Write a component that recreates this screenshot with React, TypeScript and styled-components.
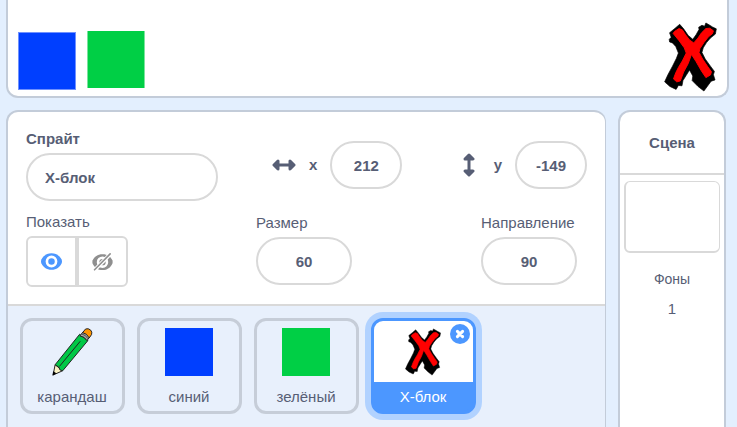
import React, { useState } from 'react';
import styled, { createGlobalStyle, css } from 'styled-components';

const ink = '#575e75';
const accent = '#4c97ff';
const line = '#d9d9d9';
const edge = '#c3ccd9';

const GlobalStyle = createGlobalStyle`
  * { box-sizing: border-box; }
  body {
    margin: 0;
    background: #e3effe;
    color: ${ink};
    font: 15px/18px "Liberation Sans", Arial, sans-serif;
    overflow: hidden;
  }
  button, input { font: inherit; color: inherit; }
`;

const Page = styled.div`
  display: flex;
  flex-direction: column;
  gap: 12px;
  min-height: 100vh;
  padding-left: 6px;
`;

const Stage = styled.section`
  display: flex;
  align-items: flex-start;
  margin-right: 8px;
  padding: 22px 10px 4px;
  background: #fff;
  border: 2px solid ${edge};
  border-top: 0;
  border-radius: 0 0 12px 12px;
`;

const StageBlock = styled.div<{ $fill: string; $fringe: string; $flat?: boolean }>`
  width: 58px;
  height: ${p => (p.$flat ? 57 : 58)}px;
  margin: ${p => (p.$flat ? '9px 0 0 11px' : '10px 0 0')};
  background: ${p => p.$fill};
  border: 1px solid ${p => p.$fringe};
  ${p => p.$flat && css`border-width: 0 1px;`}
`;

const StageCross = styled.div`
  display: flex;
  margin-left: auto;
`;

const Targets = styled.main`
  flex: 1;
  display: grid;
  grid-template-columns: minmax(0, 1fr) 108px;
  gap: 12px;
  margin-right: 11px;
`;

const Panel = styled.section`
  display: flex;
  flex-direction: column;
  background: #fff;
  border: 2px solid ${edge};
  border-bottom: 0;
  border-radius: 12px 12px 0 0;
  overflow: hidden;
`;

const SpritePanel = styled(Panel)`
  border-right-width: 1px;
`;

const Info = styled.form`
  display: flex;
  padding: 18px 18px 17px;
  border-bottom: 2px solid ${line};
`;

const NameColumn = styled.div`
  display: flex;
  flex-direction: column;
  gap: 12px;
`;

const NumberColumn = styled.div<{ $end?: boolean }>`
  display: flex;
  flex-direction: column;
  gap: 25px;
  padding-top: 11px;
  margin-left: ${p => (p.$end ? 'auto' : '38px')};
  align-items: ${p => (p.$end ? 'flex-end' : 'stretch')};
`;

const Field = styled.div<{ $inset?: boolean }>`
  display: flex;
  flex-direction: column;
  align-items: flex-start;
  gap: 5px;
  margin-right: ${p => (p.$inset ? 10 : 0)}px;
`;

const AxisField = styled.div<{ $inset?: boolean }>`
  display: flex;
  align-items: center;
  gap: 13px;
  font-weight: bold;
  padding-left: ${p => (p.$inset ? 16 : 0)}px;
`;

const Label = styled.label<{ $strong?: boolean }>`
  font-weight: ${p => (p.$strong ? 'bold' : 'inherit')};
`;

const Caption = styled.span``;

const TextBox = styled.input<{ $w: number; $left?: boolean }>`
  width: ${p => p.$w}px;
  height: 48px;
  padding: 0 ${p => (p.$left ? 17 : 8)}px;
  background: #fff;
  border: 2px solid ${line};
  border-radius: 36px;
  font-weight: bold;
  text-align: ${p => (p.$left ? 'left' : 'center')};
  outline: none;
  &:focus { border-color: ${accent}; }
`;

const Toggle = styled.div`
  display: flex;
`;

const ToggleButton = styled.button<{ $side: 'left' | 'right' }>`
  display: flex;
  align-items: center;
  justify-content: center;
  width: 51px;
  height: 51px;
  padding: 0;
  background: #fff;
  border: 2px solid ${line};
  border-radius: ${p => (p.$side === 'left' ? '6px 0 0 6px' : '0 6px 6px 0')};
  cursor: pointer;
`;

const SpriteList = styled.ul`
  flex: 1;
  display: flex;
  flex-wrap: wrap;
  align-content: flex-start;
  gap: 12px;
  margin: 0;
  padding: 12px;
  list-style: none;
  background: #e8f0fc;
`;

const SpriteItem = styled.li`
  position: relative;
`;

const SpriteCard = styled.button<{ $active: boolean }>`
  display: flex;
  flex-direction: column;
  width: 105px;
  height: 96px;
  padding: 0;
  background: transparent;
  border: 3px solid #c6cdd8;
  border-radius: 12px;
  overflow: hidden;
  cursor: pointer;
  ${p => p.$active && css`
    background: ${accent};
    border-color: ${accent};
    color: #fff;
    box-shadow: 0 0 0 6px #b1d2ff;
  `}
`;

const Costume = styled.span<{ $active: boolean }>`
  display: flex;
  justify-content: center;
  align-self: stretch;
  height: 61px;
  padding: 7px 1px 0 0;
  background: ${p => (p.$active ? '#fff' : 'transparent')};
`;

const Swatch = styled.span<{ $fill: string }>`
  width: 48px;
  height: 48px;
  background: ${p => p.$fill};
`;

const SpriteName = styled.span`
  align-self: stretch;
  padding-right: 1px;
  text-align: center;
  line-height: 29px;
`;

const DeleteButton = styled.button`
  position: absolute;
  top: 6px;
  right: 6px;
  display: flex;
  align-items: center;
  justify-content: center;
  width: 20px;
  height: 20px;
  padding: 0;
  background: ${accent};
  border: 0;
  border-radius: 50%;
  cursor: pointer;
`;

const SceneHeader = styled.h2`
  margin: 0;
  padding: 22px 0 21px;
  font-size: 15px;
  line-height: 18px;
  text-align: center;
  border-bottom: 2px solid ${line};
`;

const SceneBody = styled.div`
  display: flex;
  flex-direction: column;
  align-items: center;
  padding: 6px 4px;
`;

const Backdrop = styled.button`
  width: 96px;
  height: 72px;
  padding: 0;
  background: #fff;
  border: 1px solid ${line};
  border-width: 1px 1px 2px 2px;
  border-radius: 6px;
`;

const SceneText = styled.span<{ $small?: boolean }>`
  margin-top: ${p => (p.$small ? 17 : 12)}px;
  font-size: ${p => (p.$small ? 14 : 15)}px;
`;

const Cross = ({ width, height }: { width: number; height: number }) => (
  <svg width={width} height={height} viewBox="10 12 162 212" aria-hidden="true">
    <path
      fill="#000"
      stroke="#000"
      strokeWidth="2"
      strokeLinejoin="round"
      d="M58 18 70 32 84 52 98 64 108 50 117 34 116 27 126 21 134 24 138 14 150 21 158 26 170 32 167 48 152 60 140 74 130 90 126 104 136 124 152 146 164 162 161 172 166 188 154 192 132 222 114 208 96 190 98 176 88 158 78 174 68 190 65 206 54 205 47 217 28 208 12 194 22 172 36 146 48 122 54 106 46 86 36 75 27 72 26 64 32 58 27 44 44 30Z"
    />
    <path
      fill="#f00"
      stroke="#f00"
      strokeWidth="3"
      strokeLinejoin="round"
      d="M56 31 66 35 76 50 88 66 101 75 114 60 124 45 138 31 150 30 161 38 158 47 146 56 132 74 120 92 117 104 128 124 144 148 155 163 152 173 138 181 124 160 108 132 94 110 84 138 70 164 60 191 49 194 39 185 46 166 54 150 66 130 78 106 72 90 56 68 38 46 42 40Z"
    />
  </svg>
);

const Pencil = () => (
  <svg width="41" height="48" viewBox="155 98 123 145" aria-hidden="true">
    <g stroke="#222" strokeWidth="3" strokeLinejoin="round">
      <path fill="#fbf3c4" d="M158 240 164 209 187 227Z" />
      <path fill="#00c846" d="M164 209 238 117 263 136 187 227 179 225 175 216Z" />
      <path fill="#a9a9a9" d="M239 122 248 110Q260 110 269 125L260 136Q254 124 239 122Z" />
      <path fill="#ff9500" d="M247 112 256 101Q264 98 271 104Q277 110 274 118L267 128Q260 114 247 112Z" />
      <path fill="none" d="M177 214 240 138" />
      <path fill="none" strokeWidth="2" d="M244 116Q256 118 264 131" />
    </g>
    <path fill="#000" d="M156 242 158 229 168 235Z" />
  </svg>
);

const eyeShape = 'M32 1C48 1 57 9 63 20Q65 26 63 31C57 43 48 51 32 51S7 43 1 31Q-1 26 1 20C7 9 16 1 32 1Z';

const Eye = () => (
  <svg width="21" height="17" viewBox="0 0 64 52" aria-hidden="true">
    <path fill={accent} d={eyeShape} />
    <circle cx="32" cy="26" r="14" fill={accent} stroke="#fff" strokeWidth="8" />
  </svg>
);

const EyeOff = () => (
  <svg width="21" height="18" viewBox="-1 -2 66 55" aria-hidden="true">
    <path fill="#8f8f8f" d={eyeShape} />
    <circle cx="32" cy="26" r="14" fill="#8f8f8f" stroke="#fff" strokeWidth="8" />
    <path stroke="#fff" strokeWidth="12" d="M3 55 60-3" />
    <path stroke="#8f8f8f" strokeWidth="5" strokeLinecap="round" d="M7 50 56 0" />
  </svg>
);

const Arrow = ({ vertical }: { vertical?: boolean }) => (
  <svg width="24" height="24" viewBox="0 0 24 24" aria-hidden="true">
    <g
      transform={vertical ? 'rotate(90 12 12)' : undefined}
      fill={ink}
      stroke={ink}
      strokeWidth="3"
      strokeLinejoin="round"
    >
      <path d="M2 12 6 8V16ZM22 12 18 8V16Z" />
      <path d="M5 12H19" />
    </g>
  </svg>
);

const sprites: { name: string; art: React.ReactNode }[] = [
  { name: 'карандаш', art: <Pencil /> },
  { name: 'синий', art: <Swatch $fill="#003fff" /> },
  { name: 'зелёный', art: <Swatch $fill="#00cf45" /> },
  { name: 'Х-блок', art: <Cross width={36} height={48} /> },
];

export default function App() {
  const [active, setActive] = useState(3);
  return (
    <>
      <GlobalStyle />
      <Page>
        <Stage>
          <StageBlock $fill="#003fff" $fringe="#6f91ff" />
          <StageBlock $fill="#00cf45" $fringe="#7be49e" $flat />
          <StageCross>
            <Cross width={53} height={70} />
          </StageCross>
        </Stage>
        <Targets>
          <SpritePanel>
            <Info>
              <NameColumn>
                <Field>
                  <Label $strong htmlFor="name">Спрайт</Label>
                  <TextBox id="name" $w={192} $left defaultValue="Х-блок" />
                </Field>
                <Field>
                  <Caption id="show">Показать</Caption>
                  <Toggle role="group" aria-labelledby="show">
                    <ToggleButton type="button" $side="left" aria-label="Показать спрайт"><Eye /></ToggleButton>
                    <ToggleButton type="button" $side="right" aria-label="Скрыть спрайт"><EyeOff /></ToggleButton>
                  </Toggle>
                </Field>
              </NameColumn>
              <NumberColumn>
                <AxisField $inset>
                  <Arrow />
                  <Label htmlFor="x">x</Label>
                  <TextBox id="x" $w={72} defaultValue="212" />
                </AxisField>
                <Field>
                  <Label htmlFor="size">Размер</Label>
                  <TextBox id="size" $w={96} defaultValue="60" />
                </Field>
              </NumberColumn>
              <NumberColumn $end>
                <AxisField>
                  <Arrow vertical />
                  <Label htmlFor="y">y</Label>
                  <TextBox id="y" $w={72} defaultValue="-149" />
                </AxisField>
                <Field $inset>
                  <Label htmlFor="direction">Направление</Label>
                  <TextBox id="direction" $w={96} defaultValue="90" />
                </Field>
              </NumberColumn>
            </Info>
            <SpriteList>
              {sprites.map((s, i) => (
                <SpriteItem key={s.name}>
                  <SpriteCard type="button" $active={i === active} onClick={() => setActive(i)}>
                    <Costume $active={i === active}>{s.art}</Costume>
                    <SpriteName>{s.name}</SpriteName>
                  </SpriteCard>
                  {i === active && (
                    <DeleteButton type="button" aria-label="Удалить">
                      <svg width="10" height="10" viewBox="0 0 10 10" aria-hidden="true">
                        <path stroke="#fff" strokeWidth="3" strokeLinecap="round" d="M2.4 2.4 7.6 7.6M7.6 2.4 2.4 7.6" />
                      </svg>
                    </DeleteButton>
                  )}
                </SpriteItem>
              ))}
            </SpriteList>
          </SpritePanel>
          <Panel>
            <SceneHeader>Сцена</SceneHeader>
            <SceneBody>
              <Backdrop type="button" aria-label="Фон сцены" />
              <SceneText $small>Фоны</SceneText>
              <SceneText>1</SceneText>
            </SceneBody>
          </Panel>
        </Targets>
      </Page>
    </>
  );
}
